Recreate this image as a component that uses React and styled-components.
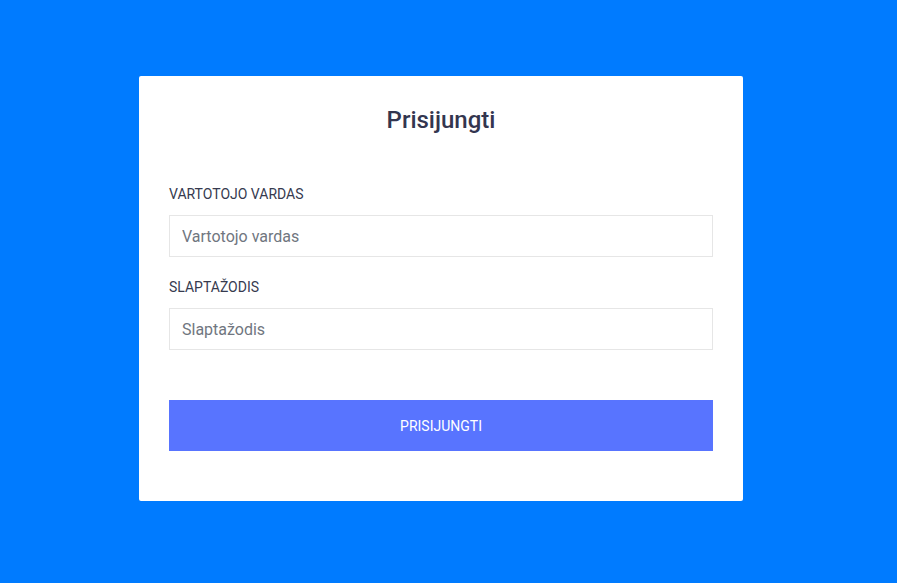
import React from "react";
import styled, { createGlobalStyle } from "styled-components";

const GlobalStyle = createGlobalStyle`
	body {
		margin: 0;
		background: #007bff;
		font-family: Roboto, "Liberation Sans", sans-serif;
	}
`;

const Page = styled.div`
	min-height: 583px;
	box-sizing: border-box;
	display: flex;
	align-items: flex-start;
	padding: 76px 0 0 139px;
`;

const Card = styled.form`
	width: 604px;
	box-sizing: border-box;
	background: #fff;
	border-radius: 2px;
	padding: 30px 30px 50px 30px;
	display: flex;
	flex-direction: column;
`;

const Title = styled.h2`
	margin: 0 0 51px 0;
	text-align: center;
	font-size: 24px;
	line-height: 28px;
	font-weight: 500;
	color: #33364f;
`;

const Field = styled.div`
	display: flex;
	flex-direction: column;
	margin-bottom: ${props => props.last ? "50px" : "21px"};

	label {
		font-size: 14px;
		line-height: 18px;
		color: #363a4f;
		text-transform: uppercase;
		margin-bottom: 12px;
	}
`;

const Input = styled.input`
	height: 42px;
	box-sizing: border-box;
	border: 1px solid #e6e6e6;
	border-radius: 0;
	padding: 0 12px;
	font-family: inherit;
	font-size: 16px;
	color: #333;
	outline: none;

	&::placeholder {
		color: #707680;
	}
`;

const Button = styled.button`
	height: 51px;
	border: none;
	background: #5874ff;
	color: #fff;
	font-family: inherit;
	font-size: 14px;
	text-transform: uppercase;
	cursor: pointer;
`;

const App = () => {
	return (
		<>
			<GlobalStyle />
			<Page>
				<Card onSubmit={e => e.preventDefault()}>
					<Title>Prisijungti</Title>
					<Field>
						<label>Vartotojo vardas</label>
						<Input type="text" placeholder="Vartotojo vardas" />
					</Field>
					<Field last>
						<label>Slaptažodis</label>
						<Input type="password" placeholder="Slaptažodis" />
					</Field>
					<Button type="submit">Prisijungti</Button>
				</Card>
			</Page>
		</>
	);
};

export default App;
